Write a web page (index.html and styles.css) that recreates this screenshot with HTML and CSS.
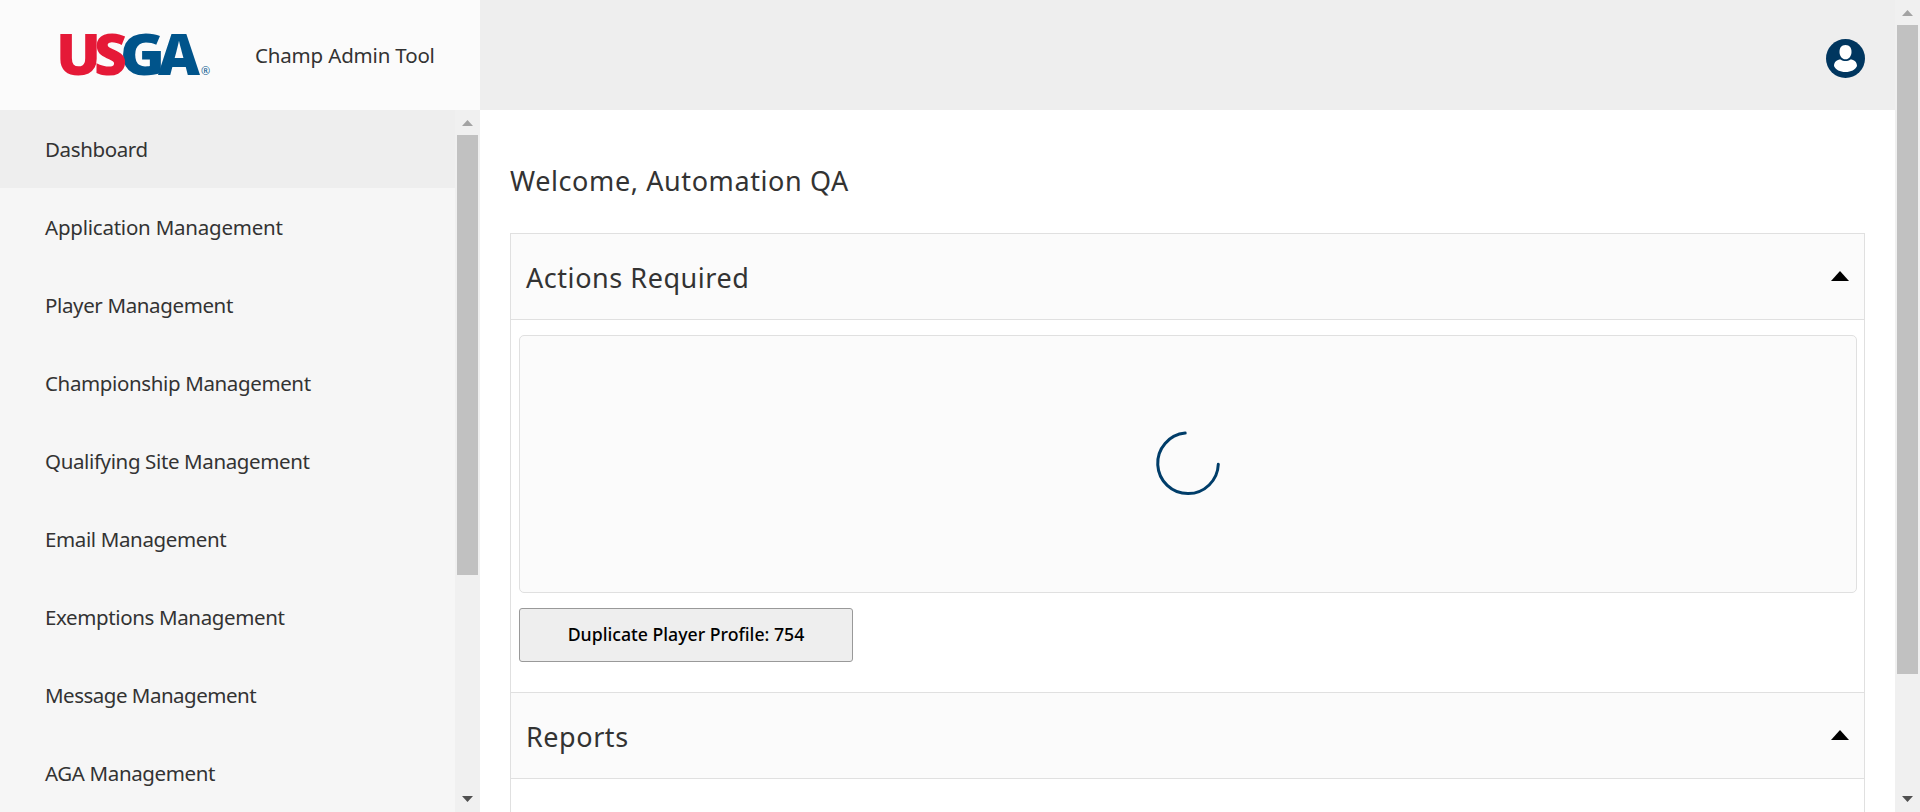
FILE: index.html
```html
<!DOCTYPE html>
<html lang="en">
<head>
<meta charset="utf-8">
<title>Champ Admin Tool</title>
<link rel="stylesheet" href="styles.css">
</head>
<body>
<div class="app">
  <aside class="sidebar">
    <div class="brand">
      <svg class="logo" width="152" height="44" viewBox="0 0 152 44" role="img" aria-label="USGA">
        <g class="logo-letters">
          <text class="blue" x="60" y="42" textLength="45" lengthAdjust="spacingAndGlyphs">G</text>
          <text class="blue" x="98" y="42" textLength="42" lengthAdjust="spacingAndGlyphs">A</text>
          <text class="red" x="-4" y="42" textLength="45" lengthAdjust="spacingAndGlyphs">U</text>
          <text class="red" x="34" y="42" textLength="33" lengthAdjust="spacingAndGlyphs">S</text>
        </g>
        <text class="reg" x="141" y="42">®</text>
      </svg>
      <span class="brand-name">Champ Admin Tool</span>
    </div>
    <div class="nav-wrap">
      <nav class="nav">
        <a class="nav-item active">Dashboard</a>
        <a class="nav-item wide">Application Management</a>
        <a class="nav-item">Player Management</a>
        <a class="nav-item">Championship Management</a>
        <a class="nav-item">Qualifying Site Management</a>
        <a class="nav-item">Email Management</a>
        <a class="nav-item">Exemptions Management</a>
        <a class="nav-item tight">Message Management</a>
        <a class="nav-item">AGA Management</a>
      </nav>
      <div class="scrollbar">
        <svg class="arrow up" width="11" height="6" viewBox="0 0 11 6"><path d="M5.5 0L11 6H0z"/></svg>
        <div class="thumb nav-thumb"></div>
        <svg class="arrow down" width="11" height="6" viewBox="0 0 11 6"><path d="M0 0H11L5.5 6z"/></svg>
      </div>
    </div>
  </aside>
  <div class="page">
    <header class="topbar">
      <svg class="user" width="39" height="39" viewBox="0 0 39 39">
        <circle cx="19.5" cy="19.5" r="19.5" fill="#00365f"/>
        <path fill="#fff" d="M8 27C8 23 11 20.6 14.6 20.6C17.5 22.6 21.5 22.6 24.4 20.6C28 20.6 31 23 31 27C29.5 30.8 25 33 19.5 33S9.5 30.8 8 27z"/>
        <path fill="#fff" d="M19.5 6C23.8 6 25.5 9 25.5 13C25.5 17 23 20.3 19.5 20.3S13.5 17 13.5 13C13.5 9 15.2 6 19.5 6z"/>
      </svg>
    </header>
    <main class="content">
      <h1 class="welcome">Welcome, Automation QA</h1>
      <div class="card">
        <section class="section">
          <div class="section-head">
            <h2>Actions Required</h2>
            <svg width="18" height="10" viewBox="0 0 18 10"><path d="M9 0L18 10H0z"/></svg>
          </div>
          <div class="section-body">
            <div class="loading">
              <svg width="66" height="66" viewBox="0 0 66 66"><path d="M30.2 3.1A30.3 30.3 0 1 0 63.3 34.3" fill="none" stroke="#003d69" stroke-width="3" stroke-linecap="round"/></svg>
            </div>
            <button class="action">Duplicate Player Profile: 754</button>
          </div>
        </section>
        <section class="section">
          <div class="section-head">
            <h2>Reports</h2>
            <svg width="18" height="10" viewBox="0 0 18 10"><path d="M9 0L18 10H0z"/></svg>
          </div>
        </section>
      </div>
    </main>
  </div>
  <div class="scrollbar">
    <svg class="arrow up" width="11" height="6" viewBox="0 0 11 6"><path d="M5.5 0L11 6H0z"/></svg>
    <div class="thumb page-thumb"></div>
    <svg class="arrow down" width="11" height="6" viewBox="0 0 11 6"><path d="M0 0H11L5.5 6z"/></svg>
  </div>
</div>
</body>
</html>
```
FILE: styles.css
```css
* { box-sizing: border-box; }
body { margin: 0; overflow: hidden; background: #fff; color: #333; font-family: "Noto Sans", "Open Sans", sans-serif; }
svg { display: block; flex: none; }
.app { display: flex; height: 812px; overflow: hidden; }

.sidebar { display: flex; flex-direction: column; width: 480px; flex: none; background: #f6f6f6; }
.brand { display: flex; height: 110px; flex: none; padding: 33px 0 0 60px; background: #fbfbfb; }
.logo { overflow: visible; }
.logo-letters { font: 800 57px "Open Sans", sans-serif; }
.red { fill: #e51937; }
.blue { fill: #00548b; }
.reg { fill: #00548b; font: 11px "Open Sans", sans-serif; }
.brand-name { margin: 7px 0 0 43px; font-size: 20.5px; line-height: 30px; letter-spacing: -0.17px; white-space: nowrap; }

.nav-wrap { display: flex; flex: 1; min-height: 0; overflow: hidden; }
.nav { flex: 1; min-width: 0; }
.nav-item { display: flex; align-items: center; height: 78px; padding: 0 0 1px 45px; font-size: 20.5px; line-height: 30px; letter-spacing: -0.37px; white-space: nowrap; }
.wide { letter-spacing: -0.22px; }
.tight { letter-spacing: -0.5px; }
.active { background: #eee; }

.scrollbar { display: flex; flex-direction: column; align-items: center; width: 25px; flex: none; background: #f0f0f0; padding: 10px 0; }
.arrow.up { fill: #a3a3a3; }
.arrow.down { margin-top: auto; fill: #505050; }
.thumb { width: 21px; margin-top: 9px; background: #c1c1c1; }
.nav-thumb { height: 440px; }
.page-thumb { height: 649px; }

.page { flex: 1; min-width: 0; }
.topbar { display: flex; justify-content: flex-end; height: 110px; padding: 39px 30px 0 0; background: #eee; }
.content { padding: 50px 30px 0; }
.welcome { margin: 0; height: 73px; font-size: 27px; line-height: 42px; font-weight: 400; letter-spacing: 0.6px; }
.card { border: 1px solid #e0e0e0; height: 700px; }
.section-head { display: flex; align-items: center; justify-content: space-between; height: 86px; padding: 0 15px; background: #fbfbfb; border-bottom: 1px solid #e0e0e0; }
.section-head h2 { margin: 2px 0 0; font-size: 27px; line-height: 40px; font-weight: 400; letter-spacing: 0.55px; }
.section-head svg { margin-bottom: 1px; }
.section-body { height: 373px; padding: 15px 7px 0 8px; border-bottom: 1px solid #e0e0e0; }
.loading { display: flex; align-items: center; justify-content: center; height: 258px; padding: 0 1px 2px 0; border: 1px solid #e0e0e0; border-radius: 5px; background: #fbfbfb; }
.action { display: flex; align-items: center; justify-content: center; width: 334px; height: 54px; margin-top: 15px; padding: 0 0 2px; border: 1px solid #999; border-radius: 3px; background: #eee; color: #000; font: 500 17.7px/26px "Noto Sans", sans-serif; }
```
